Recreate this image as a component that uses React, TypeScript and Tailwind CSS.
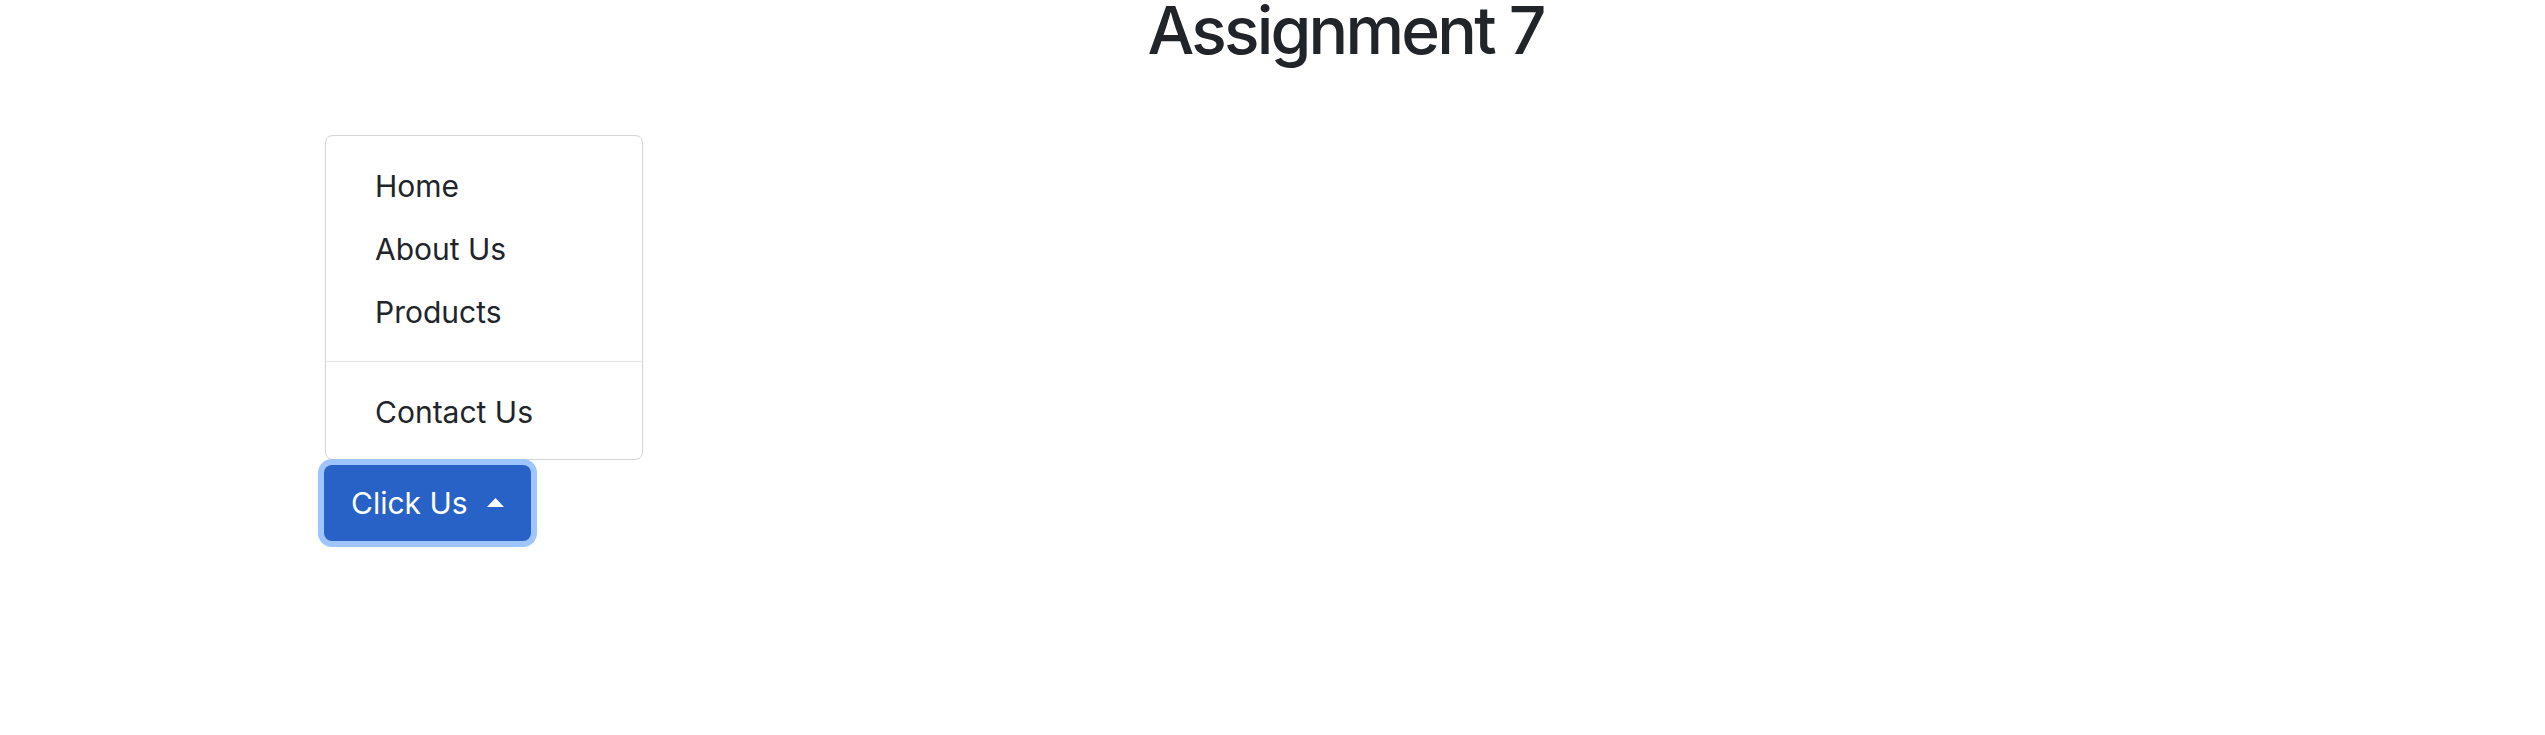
import { useState } from "react";

const items = ["Home", "About Us", "Products"];

export default function App() {
  const [open, setOpen] = useState(true);

  return (
    <div className="min-h-[735px] w-full bg-white font-['Inter',sans-serif] text-[#212529]">
      {/* Heading */}
      <h1 className="pl-[146px] text-center text-[66px] font-medium leading-[60px] tracking-[-2.8px]">
        Assignment 7
      </h1>

      {/* Dropup */}
      <div className="ml-[325px] mt-[75px] flex w-[318px] flex-col items-start">
        {open && (
          <div className="w-[318px] rounded-lg border border-[#d4d4d4] bg-white pb-[15px] pt-[19px]">
            {items.map((item) => (
              <a
                key={item}
                href="#"
                className="block px-[49px] text-[30px] leading-[63px] text-[#212529]"
              >
                {item}
              </a>
            ))}
            <div className="mb-[19px] mt-[17px] h-px bg-[#e6e6e8]" />
            <a
              href="#"
              className="block px-[49px] text-[30px] leading-[63px] text-[#212529]"
            >
              Contact Us
            </a>
          </div>
        )}
        <button
          onClick={() => setOpen(!open)}
          className="-ml-px mt-[5px] flex h-[76px] w-[207px] items-center gap-[19px] rounded-lg bg-[#2962c6] pl-[27px] text-[30px] text-white shadow-[0_0_0_6px_#9ec5fe]"
        >
          <span>Click Us</span>
          <svg width="17" height="9" viewBox="0 0 17 9" className="mt-[-2px]">
            <path d="M0 9 L8.5 0 L17 9 Z" fill="white" />
          </svg>
        </button>
      </div>
    </div>
  );
}
